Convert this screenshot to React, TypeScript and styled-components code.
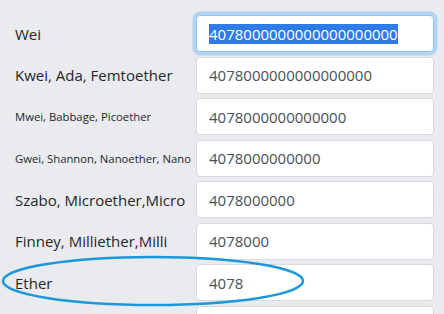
import { Fragment, useEffect, useRef } from 'react';
import styled, { createGlobalStyle } from 'styled-components';

const GlobalStyle = createGlobalStyle`
  html, body {
    margin: 0;
    padding: 0;
    background: #e9ebee;
  }
  body {
    font-family: 'Open Sans', 'Noto Sans', sans-serif;
    color: #212529;
  }
`;

const Page = styled.div`
  position: relative;
  width: 444px;
  height: 314px;
  overflow: hidden;
  padding: 15px 10px 0 15px;
  box-sizing: border-box;
`;

const Form = styled.form`
  display: grid;
  grid-template-columns: 181px 1fr;
  row-gap: 4.5px;
  align-items: center;
`;

const Label = styled.label<{ $small?: boolean }>`
  font-size: ${(p) => (p.$small ? '11.3px' : '15px')};
  white-space: nowrap;
  color: #24272b;
`;

const Input = styled.input`
  box-sizing: border-box;
  width: 100%;
  height: 37px;
  padding: 0 12px;
  font-family: 'Open Sans', 'Noto Sans', sans-serif;
  font-size: 15px;
  color: #495057;
  background: #fff;
  border: 1px solid #d6dade;
  border-radius: 4px;
  outline: none;

  &:focus {
    border-color: #8cc3fb;
    box-shadow: 0 0 0 3.5px rgba(0, 123, 255, 0.22);
  }

  &::selection {
    background: #2f7be6;
    color: #fff;
  }
`;

const Mark = styled.svg`
  position: absolute;
  left: 0;
  top: 0;
  pointer-events: none;
`;

type Unit = { label: string; value: string; small?: boolean };

const units: Unit[] = [
  { label: 'Wei', value: '4078000000000000000000' },
  { label: 'Kwei, Ada, Femtoether', value: '4078000000000000000' },
  { label: 'Mwei, Babbage, Picoether', value: '4078000000000000', small: true },
  { label: 'Gwei, Shannon, Nanoether, Nano', value: '4078000000000', small: true },
  { label: 'Szabo, Microether,Micro', value: '4078000000' },
  { label: 'Finney, Milliether,Milli', value: '4078000' },
  { label: 'Ether', value: '4078' },
  // the next row only peeks in at the bottom edge
  { label: '', value: '' },
];

export default function App() {
  const first = useRef<HTMLInputElement>(null);

  useEffect(() => {
    first.current?.focus();
    first.current?.select();
  }, []);

  return (
    <Page>
      <GlobalStyle />
      <Form onSubmit={(e) => e.preventDefault()}>
        {units.map((u, i) => (
          <Fragment key={i}>
            <Label $small={u.small}>{u.label}</Label>
            <Input ref={i === 0 ? first : undefined} defaultValue={u.value} />
          </Fragment>
        ))}
      </Form>
      <Mark width="444" height="314">
        <ellipse cx="153" cy="281" rx="150" ry="24" fill="none" stroke="#1b98d9" strokeWidth="2.5" />
      </Mark>
    </Page>
  );
}
